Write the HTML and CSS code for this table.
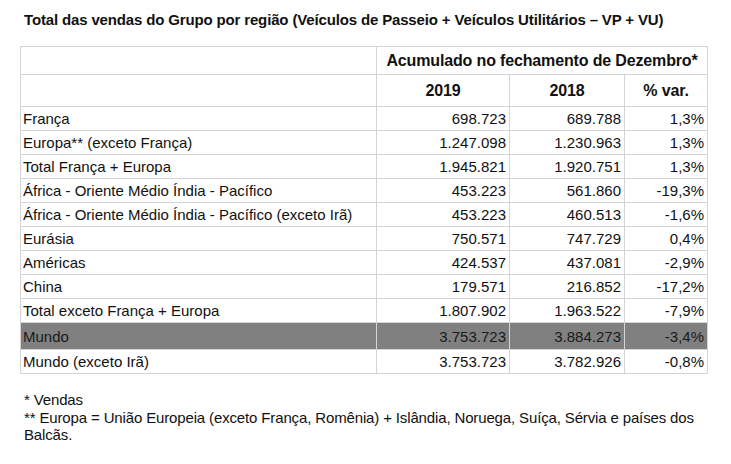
FILE: index.html
```html
<!DOCTYPE html>
<html lang="pt">
<head>
<meta charset="utf-8">
<link rel="stylesheet" href="styles.css">
</head>
<body>
<div class="page">
  <h1 class="title">Total das vendas do Grupo por região (Veículos de Passeio + Veículos Utilitários – VP + VU)</h1>
  <table class="sales">
    <colgroup>
      <col class="c-region">
      <col class="c-2019">
      <col class="c-2018">
      <col class="c-var">
    </colgroup>
    <thead>
      <tr class="h1row"><th></th><th colspan="3">Acumulado no fechamento de Dezembro*</th></tr>
      <tr class="h2row"><th></th><th>2019</th><th>2018</th><th>% var.</th></tr>
    </thead>
    <tbody>
      <tr><td>França</td><td>698.723</td><td>689.788</td><td>1,3%</td></tr>
      <tr><td>Europa** (exceto França)</td><td>1.247.098</td><td>1.230.963</td><td>1,3%</td></tr>
      <tr><td>Total França + Europa</td><td>1.945.821</td><td>1.920.751</td><td>1,3%</td></tr>
      <tr><td>África - Oriente Médio Índia - Pacífico</td><td>453.223</td><td>561.860</td><td>-19,3%</td></tr>
      <tr><td>África - Oriente Médio Índia - Pacífico (exceto Irã)</td><td>453.223</td><td>460.513</td><td>-1,6%</td></tr>
      <tr><td>Eurásia</td><td>750.571</td><td>747.729</td><td>0,4%</td></tr>
      <tr><td>Américas</td><td>424.537</td><td>437.081</td><td>-2,9%</td></tr>
      <tr><td>China</td><td>179.571</td><td>216.852</td><td>-17,2%</td></tr>
      <tr><td>Total exceto França + Europa</td><td>1.807.902</td><td>1.963.522</td><td>-7,9%</td></tr>
      <tr class="world"><td>Mundo</td><td>3.753.723</td><td>3.884.273</td><td>-3,4%</td></tr>
      <tr><td>Mundo (exceto Irã)</td><td>3.753.723</td><td>3.782.926</td><td>-0,8%</td></tr>
    </tbody>
  </table>
  <div class="notes">
    <p>* Vendas</p>
    <p>** Europa = União Europeia (exceto França, Romênia) + Islândia, Noruega, Suíça, Sérvia e países dos Balcãs.</p>
  </div>
</div>
</body>
</html>
```

FILE: styles.css
```css
html, body {
  margin: 0;
  padding: 0;
  background: #ffffff;
}

.page {
  padding: 11px 0 0 24px;
  font-family: "Liberation Sans", Arial, sans-serif;
  color: #111111;
}

.title {
  margin: 0 0 17px 0;
  font-size: 15px;
  font-weight: bold;
  line-height: 18px;
  letter-spacing: -0.15px;
}

.sales {
  border-collapse: collapse;
  margin-left: -4px;
  table-layout: fixed;
  width: 687px;
  font-size: 15px;
}

.c-region { width: 356px; }
.c-2019 { width: 133px; }
.c-2018 { width: 115px; }
.c-var { width: 83px; }

.sales th,
.sales td {
  border: 1px solid #d4d4d4;
  padding: 0 3px 0 3px;
  white-space: nowrap;
}

.sales th {
  font-size: 16px;
  font-weight: bold;
  text-align: center;
  letter-spacing: -0.15px;
}

.h1row th { height: 27px; }
.h2row th { height: 31px; }

.sales td {
  height: 23px;
  text-align: right;
}

.sales td:first-child {
  text-align: left;
  padding-left: 2px;
}

.world td {
  height: 26px;
  background: #808080;
  color: #1a1a1a;
}

.notes {
  margin-top: 17px;
  font-size: 15px;
  line-height: 17.5px;
  letter-spacing: -0.14px;
  width: 690px;
}

.notes p {
  margin: 0;
}
```
